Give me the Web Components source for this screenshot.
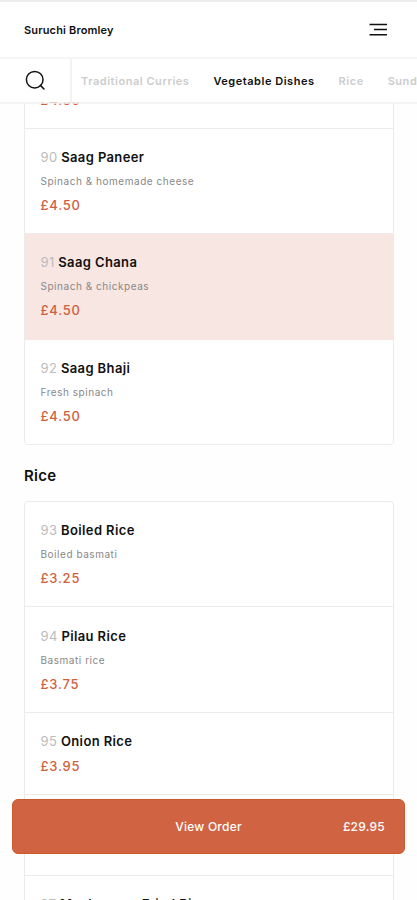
<!DOCTYPE html>
<html lang="en">
<head>
<meta charset="utf-8">
<title>Menu</title>
<style>
  body {
    margin: 0;
    background: #fefefe;
    font-family: Inter, "Liberation Sans", sans-serif;
    color: #111;
  }
</style>
</head>
<body>
<menu-page>
  <page-header slot="header" name="Suruchi Bromley"></page-header>
  <category-nav slot="header">
    <category-tab>Traditional Curries</category-tab>
    <category-tab active>Vegetable Dishes</category-tab>
    <category-tab>Rice</category-tab>
    <category-tab>Sundries</category-tab>
  </category-nav>
  <menu-section>
    <menu-item price="£4.50"></menu-item>
    <menu-item number="90" name="Saag Paneer" description="Spinach &amp; homemade cheese" price="£4.50"></menu-item>
    <menu-item number="91" name="Saag Chana" description="Spinach &amp; chickpeas" price="£4.50" selected></menu-item>
    <menu-item number="92" name="Saag Bhaji" description="Fresh spinach" price="£4.50"></menu-item>
  </menu-section>
  <menu-section heading="Rice">
    <menu-item number="93" name="Boiled Rice" description="Boiled basmati" price="£3.25"></menu-item>
    <menu-item number="94" name="Pilau Rice" description="Basmati rice" price="£3.75"></menu-item>
    <menu-item number="95" name="Onion Rice" price="£3.95"></menu-item>
    <menu-item></menu-item>
    <menu-item number="97" name="Mushrooms Fried Rice"></menu-item>
  </menu-section>
  <order-bar slot="footer" total="£29.95">View Order</order-bar>
</menu-page>

<script>
class MenuPage extends HTMLElement {
  constructor() {
    super();
    this.attachShadow({ mode: "open" });
    this.shadowRoot.innerHTML = `
      <style>
        :host {
          display: flex;
          flex-direction: column;
          position: relative;
          height: 900px;
          overflow: hidden;
        }
        main {
          flex: 1;
          min-height: 0;
          margin-top: -2px;
          overflow: hidden;
          padding: 0 23.5px 0 24px;
        }
        .list {
          margin-top: -56.5px;
        }
        .footer {
          position: absolute;
          left: 12px;
          right: 12px;
          bottom: 46px;
        }
      </style>
      <slot name="header"></slot>
      <main><div class="list"><slot></slot></div></main>
      <div class="footer"><slot name="footer"></slot></div>
    `;
  }
}

class PageHeader extends HTMLElement {
  constructor() {
    super();
    this.attachShadow({ mode: "open" });
  }

  connectedCallback() {
    this.shadowRoot.innerHTML = `
      <style>
        :host {
          display: flex;
          align-items: center;
          justify-content: space-between;
          box-sizing: border-box;
          height: 59px;
          padding: 0 30px 0 24px;
          border-top: 2px solid #ededed;
          border-bottom: 2px solid #f5f5f5;
          background: #fff;
        }
        .name {
          font-size: 11px;
          font-weight: 600;
          letter-spacing: 0.15px;
        }
        svg {
          display: block;
        }
      </style>
      <span class="name">${this.getAttribute("name")}</span>
      <svg width="18" height="14" viewBox="0 0 18 14" fill="none" stroke="#111" stroke-width="1.5">
        <path d="M0.5 1.5H18M5 6.5H18M0.5 11.7H18"/>
      </svg>
    `;
  }
}

class CategoryNav extends HTMLElement {
  constructor() {
    super();
    this.attachShadow({ mode: "open" });
    this.shadowRoot.innerHTML = `
      <style>
        :host {
          display: flex;
          position: relative;
          z-index: 1;
          box-sizing: border-box;
          height: 45px;
          border-bottom: 2px solid rgba(240, 240, 240, 0.75);
          background: #fff;
          background-clip: padding-box;
        }
        .search {
          flex: none;
          display: flex;
          align-items: center;
          box-sizing: border-box;
          width: 72px;
          padding: 0 0 1px 25px;
          border-right: 2px solid #f3f3f3;
        }
        .tabs {
          flex: 1;
          display: flex;
          align-items: center;
          gap: 24px;
          min-width: 0;
          padding: 1px 0 0 9px;
          overflow: hidden;
        }
      </style>
      <div class="search">
        <svg width="21" height="21" viewBox="0 0 21 21" fill="none" stroke="#111" stroke-width="1.5">
          <circle cx="9.7" cy="9.7" r="8.3"/>
          <path d="M15.4 15.4L19 19" stroke-linecap="round"/>
        </svg>
      </div>
      <div class="tabs"><slot></slot></div>
    `;
  }
}

class CategoryTab extends HTMLElement {
  constructor() {
    super();
    this.attachShadow({ mode: "open" });
    this.shadowRoot.innerHTML = `
      <style>
        :host {
          display: block;
          flex: none;
          font-size: 11px;
          font-weight: 600;
          letter-spacing: 0.53px;
          white-space: nowrap;
          color: #ccc;
        }
        :host([active]) {
          color: #111;
        }
      </style>
      <slot></slot>
    `;
  }
}

class MenuSection extends HTMLElement {
  constructor() {
    super();
    this.attachShadow({ mode: "open" });
  }

  connectedCallback() {
    const heading = this.getAttribute("heading");
    this.shadowRoot.innerHTML = `
      <style>
        :host {
          display: block;
        }
        h2 {
          margin: 0;
          padding: 20.8px 0 15.3px;
          font-size: 15px;
          line-height: 20px;
          font-weight: 600;
          letter-spacing: 0.25px;
        }
        .card {
          border: 1px solid #ebebeb;
          border-radius: 4px;
          background: #fff;
          overflow: hidden;
        }
      </style>
      ${heading ? `<h2>${heading}</h2>` : ""}
      <div class="card"><slot></slot></div>
    `;
  }
}

class MenuItem extends HTMLElement {
  constructor() {
    super();
    this.attachShadow({ mode: "open" });
  }

  connectedCallback() {
    const number = this.getAttribute("number") || "";
    const name = this.getAttribute("name") || "";
    const description = this.getAttribute("description");
    const price = this.getAttribute("price") || "";
    this.shadowRoot.innerHTML = `
      <style>
        :host {
          display: block;
          padding: 18.2px 15.5px;
          border-bottom: 1px solid #ebebeb;
        }
        :host(:last-child) {
          border-bottom: 0;
        }
        :host([selected]) {
          background: #f7e6e2;
          border-color: #f7e6e2;
        }
        .title {
          height: 20px;
          font-size: 13px;
          line-height: 20px;
          font-weight: 600;
          letter-spacing: 0.38px;
        }
        .number {
          font-weight: 400;
          color: #bbb;
        }
        .description {
          height: 16px;
          margin-top: 6px;
          font-size: 10px;
          line-height: 16px;
          letter-spacing: 0.54px;
          color: #888;
        }
        .price {
          height: 20px;
          margin-top: 5px;
          font-size: 13px;
          line-height: 20px;
          font-weight: 500;
          letter-spacing: 0.75px;
          color: #cf5f3f;
        }
        .price:empty {
          margin-top: 3px;
        }
        .description + .price {
          margin-top: 6px;
        }
      </style>
      <div class="title"><span class="number">${number}</span> ${name}</div>
      ${description ? `<div class="description">${description}</div>` : ""}
      <div class="price">${price}</div>
    `;
  }
}

class OrderBar extends HTMLElement {
  constructor() {
    super();
    this.attachShadow({ mode: "open" });
  }

  connectedCallback() {
    this.shadowRoot.innerHTML = `
      <style>
        :host {
          display: grid;
          grid-template-columns: 1fr auto 1fr;
          align-items: center;
          box-sizing: border-box;
          height: 55px;
          padding: 0 19px;
          border: 1px solid #c95a2e;
          border-radius: 6px;
          background: #cf6342;
          color: #fff;
          font-size: 12px;
          font-weight: 500;
          letter-spacing: 0.25px;
        }
        .label {
          grid-column: 2;
        }
        .total {
          justify-self: end;
        }
      </style>
      <span class="label"><slot></slot></span>
      <span class="total">${this.getAttribute("total")}</span>
    `;
  }
}

customElements.define("menu-page", MenuPage);
customElements.define("page-header", PageHeader);
customElements.define("category-nav", CategoryNav);
customElements.define("category-tab", CategoryTab);
customElements.define("menu-section", MenuSection);
customElements.define("menu-item", MenuItem);
customElements.define("order-bar", OrderBar);
</script>
</body>
</html>
